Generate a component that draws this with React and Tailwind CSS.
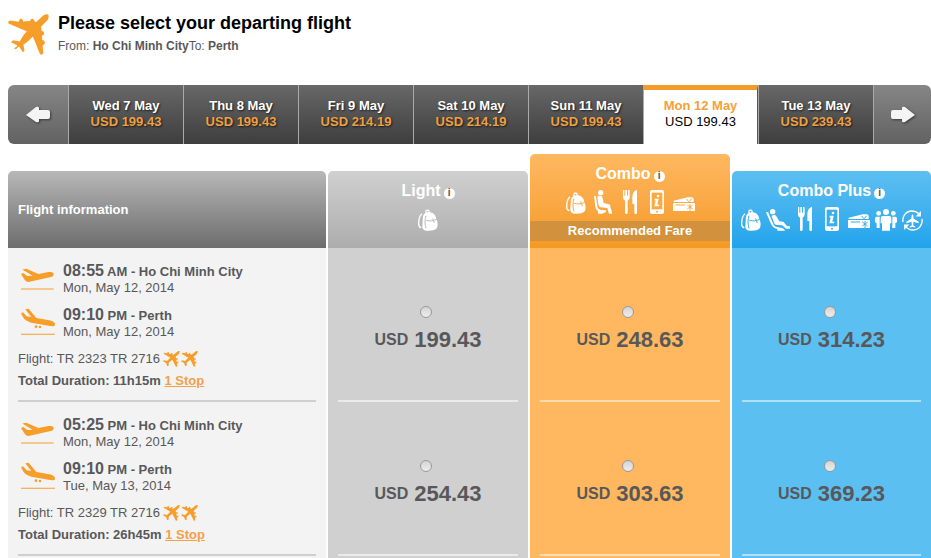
import React, { useState } from "react";

const dates = [
  { day: "Wed 7 May", price: "USD 199.43" },
  { day: "Thu 8 May", price: "USD 199.43" },
  { day: "Fri 9 May", price: "USD 214.19" },
  { day: "Sat 10 May", price: "USD 214.19" },
  { day: "Sun 11 May", price: "USD 199.43" },
  { day: "Mon 12 May", price: "USD 199.43" },
  { day: "Tue 13 May", price: "USD 239.43" },
];

const flights = [
  {
    depart: { time: "08:55", half: "AM", city: "Ho Chi Minh City", date: "Mon, May 12, 2014" },
    arrive: { time: "09:10", half: "PM", city: "Perth", date: "Mon, May 12, 2014" },
    numbers: "TR 2323 TR 2716",
    duration: "11h15m",
    fares: ["199.43", "248.63", "314.23"],
  },
  {
    depart: { time: "05:25", half: "PM", city: "Ho Chi Minh City", date: "Mon, May 12, 2014" },
    arrive: { time: "09:10", half: "PM", city: "Perth", date: "Tue, May 13, 2014" },
    numbers: "TR 2329 TR 2716",
    duration: "26h45m",
    fares: ["254.43", "303.63", "369.23"],
  },
];

const fareStyles = [
  { name: "Light", cell: "bg-[#d0d0d0]", line: "border-[#ebebeb]" },
  { name: "Combo", cell: "bg-[#ffb860]", line: "border-[#ffddaf]" },
  { name: "Combo Plus", cell: "bg-[#5cbff1]", line: "border-[#b0e0f8]" },
];

function Plane({ className }) {
  return (
    <svg viewBox="23 44 122 122" className={className} fill="#f79d2a" aria-hidden="true">
      <path d="M143 46C137 43 131 46 126 50L107 68L102 66C101 57 93 55 90 62L88 65L68 66C67 56 58 56 56 64L55 67L30 63L24 66V72L79 95C70 105 63 115 58 126L38 122L32 128L50 137C51 140 47 143 41 146L45 149C50 148 53 142 56 141L67 158L72 153L69 135C79 129 88 120 97 111L118 163L124 165L128 161L126 138C134 135 135 125 128 122L125 121L124 109C132 106 133 98 126 95L123 94L121 82L139 64C144 58 145 51 143 46Z" />
    </svg>
  );
}

function SmallPlane() {
  return (
    <svg viewBox="0 0 51 48" className="h-4 w-[17px]" fill="#f79d2a" aria-hidden="true">
      <path d="M50 0C46 -1 42 2 39 5L32 11L28 10V6H24V9L18 8V4H13V7L4 5L2 8L22 20L12 30L3 28L0 31L9 36L13 46L17 44L17 35L28 26L39 48L43 46L42 37H46V32H41L40 26H44V22H39L38 17L45 11C48 8 51 4 50 0Z" />
    </svg>
  );
}

function TakeOff() {
  return (
    <svg viewBox="60 39 106 66" className="mt-1 h-[22px] w-[35px]" fill="#f79d2a" aria-hidden="true">
      <path d="M67 43L79 41L116 57L146 51C158 49 163 53 162 58C161 63 157 66 150 67L86 81C80 81 76 78 73 73L63 57L70 54L82 63L98 62Z" />
      <path d="M63 101H162V104H63Z" />
    </svg>
  );
}

function Landing() {
  return (
    <svg viewBox="60 160 108 81" className="h-[27px] w-[36px]" fill="#f79d2a" aria-hidden="true">
      <path d="M76 164L86 162L109 190L148 197C160 199 166 205 165 210C164 215 158 215 150 214L94 204C80 200 73 194 69 187L63 176L69 173L80 185L94 187Z" />
      <circle cx="108" cy="216" r="4" />
      <circle cx="120" cy="217" r="4" />
      <path d="M63 237H165V240H63Z" />
    </svg>
  );
}

function Backpack() {
  return (
    <svg viewBox="0 0 60 66" className="h-[22px] w-[20px]" aria-hidden="true">
      <g fill="none" stroke="#fff" strokeWidth="4">
        <path d="M12 14C4 20 2 30 2 44C2 52 5 55 10 56" />
        <path d="M24 12V6C24 3 33 3 33 6V12" />
      </g>
      <path fill="#fff" d="M15 22C17 14 24 10 32 10C46 10 54 18 55 32C60 38 60 52 56 58C50 65 36 66 26 65C16 64 13 60 13 52Z" />
      <g fill="none" stroke="currentColor" strokeWidth="3">
        <path d="M24 20C20 32 20 46 24 58" />
        <path d="M25 34C36 37 48 36 55 31M44 28L49 42" />
      </g>
    </svg>
  );
}

function Seat() {
  return (
    <svg viewBox="0 0 54 72" className="h-[24px] w-[18px]" fill="#fff" aria-hidden="true">
      <circle cx="20" cy="8" r="8" />
      <path d="M10 20C13 16 23 16 25 21L29 39L45 43C49 44 49 48 49 51L54 66V71H45L40 54L21 52C16 51 14 48 13 43Z" />
      <path d="M0 17L6 19L10 48C11 56 15 59 21 60L36 61V66L24 71H12V63C7 60 5 55 4 50Z" />
    </svg>
  );
}

function Recline() {
  return (
    <svg viewBox="0 0 72 66" className="h-[22px] w-[24px]" fill="#fff" aria-hidden="true">
      <circle cx="20" cy="8" r="8" />
      <path d="M17 21C21 16 29 17 31 22L40 37L52 38L63 51L72 52V59H60L49 49L32 48C28 47 26 45 24 41Z" />
      <path d="M0 10L6 9L21 43C24 51 29 54 36 55L50 57L58 65H34V60C24 58 19 53 15 45Z" />
    </svg>
  );
}

function Cutlery() {
  return (
    <svg viewBox="0 0 42 72" className="h-[24px] w-[14px]" fill="#fff" aria-hidden="true">
      <path d="M0 0H4V17H7V0H12V17H15V0H20V22C20 28 16 30 14 32V68C14 73 6 73 6 68V32C3 30 0 28 0 22Z" />
      <path d="M42 0V68C42 73 34 73 34 68V42H28V22C28 10 34 1 42 0Z" />
    </svg>
  );
}

function Phone() {
  return (
    <svg viewBox="0 0 42 72" className="h-[24px] w-[14px]" aria-hidden="true">
      <rect width="42" height="72" rx="6" fill="#fff" />
      <rect x="5" y="8" width="32" height="50" fill="currentColor" />
      <g fill="#fff">
        <circle cx="24" cy="18" r="4" />
        <path d="M14 26H26L22 44H28L27 49H13L14 44L17 31H13Z" />
      </g>
      <circle cx="21" cy="65" r="3" fill="currentColor" />
    </svg>
  );
}

function Tickets() {
  return (
    <svg viewBox="0 0 66 48" className="mb-[2px] h-[16px] w-[22px]" aria-hidden="true">
      <path fill="#fff" d="M2 14L44 4L58 4L62 8V18H2Z" />
      <rect y="21" width="66" height="24" rx="2" fill="#fff" />
      <g fill="none" stroke="currentColor" strokeWidth="3">
        <path d="M8 27H36M41 9L47 17M56 8L49 17" />
        <path d="M43 27L59 39M59 27L43 39M51 24V45" />
      </g>
    </svg>
  );
}

function Family() {
  return (
    <svg viewBox="0 0 66 66" className="h-[22px] w-[22px]" fill="#fff" aria-hidden="true">
      <circle cx="11" cy="13" r="7" />
      <circle cx="55" cy="13" r="7" />
      <path d="M5 23H14V57H5V42L0 40V29Q0 23 5 23ZM61 23H52V57H61V42L66 40V29Q66 23 61 23Z" />
      <circle cx="33" cy="9" r="9" />
      <path d="M24 21H42Q49 21 49 28V43H45V65H21V43H17V28Q17 21 24 21Z" />
    </svg>
  );
}

function FlexiPlane() {
  return (
    <svg viewBox="0 0 62 62" className="h-[21px] w-[21px]" aria-hidden="true">
      <g fill="none" stroke="#fff" strokeWidth="4">
        <path d="M3 36C0 20 10 4 29 3C38 3 45 6 51 13" />
        <path d="M59 26C62 42 51 58 33 59C24 59 17 56 11 49" />
      </g>
      <path fill="#fff" d="M56 3V19H40ZM6 59V43H22Z" />
      <path fill="#fff" d="M31 13C34 13 34 18 34 25L49 35V39L34 35L33 45L39 49V52L31 50L23 52V49L29 45L28 35L13 39V35L28 25C28 18 28 13 31 13Z" />
    </svg>
  );
}

function ArrowLeft() {
  return (
    <svg viewBox="0 0 24 18" className="h-[18px] w-[24px] drop-shadow-[1px_1px_1px_#00000080]" fill="#f4f4f4" aria-hidden="true">
      <path d="M0 9L10 1Q13 0 13 2V4H22Q24 4 24 6V11Q24 13 22 13H13V15Q13 17 10 16Z" />
    </svg>
  );
}

function ArrowRight() {
  return (
    <svg viewBox="0 0 24 18" className="h-[18px] w-[24px] drop-shadow-[1px_1px_1px_#00000080]" fill="#f4f4f4" aria-hidden="true">
      <path d="M24 9L14 1Q11 0 11 2V4H2Q0 4 0 6V11Q0 13 2 13H11V15Q11 17 14 16Z" />
    </svg>
  );
}

function FareTitle({ children }) {
  return (
    <div className="flex items-center justify-center gap-[3px] text-[16px] leading-5 font-bold text-white">
      <span>{children}</span>
      <button
        type="button"
        aria-label={`About ${children}`}
        className="mt-1 flex size-[11px] items-center justify-center rounded-full bg-white text-[10px] leading-none font-bold text-[#555]"
      >
        i
      </button>
    </div>
  );
}

function Perks({ icons }) {
  return (
    <div className="flex h-[25px] justify-center pb-px">
      {icons.map((Icon, i) => (
        <span key={i} className="flex w-[27px] items-end justify-center">
          <Icon />
        </span>
      ))}
    </div>
  );
}

function Leg({ icon, leg }) {
  return (
    <div className="flex h-11 gap-[7px] pl-[2px]">
      <div className="flex w-9 items-start pt-[2px]">{icon}</div>
      <div>
        <div className="text-[13px] leading-[18px] font-bold">
          <span className="text-[16px]">{leg.time}</span> {leg.half} - {leg.city}
        </div>
        <div className="leading-[14px]">{leg.date}</div>
      </div>
    </div>
  );
}

export default function App() {
  const [selectedDate, setSelectedDate] = useState(5);

  return (
    <main className="overflow-hidden bg-white pl-2 font-['Liberation_Sans',Arial,sans-serif] text-[13px] text-[#58585a]">
      <header className="flex gap-[9px] pt-[14px]">
        <Plane className="size-[41px]" />
        <div className="-mt-[2px]">
          <h1 className="text-[18px] leading-[22px] font-bold text-black">
            Please select your departing flight
          </h1>
          <p className="pt-1 text-[12px] leading-4">
            From: <b>Ho Chi Minh City</b>To: <b>Perth</b>
          </p>
        </div>
      </header>

      <nav
        aria-label="Departure dates"
        className="mt-[30px] grid h-[59px] grid-cols-[60px_repeat(7,1fr)_58px] overflow-hidden rounded-md"
      >
        <button
          type="button"
          aria-label="Earlier dates"
          className="flex items-center justify-center bg-linear-to-b from-[#868686] to-[#626262]"
        >
          <ArrowLeft />
        </button>
        {dates.map((d, i) =>
          i === selectedDate ? (
            <button
              key={d.day}
              type="button"
              aria-current="date"
              className="border-t-[5px] border-r border-l border-t-[#f59b2c] border-r-[#555] border-l-[#aaa] bg-white pb-[6px] leading-4"
            >
              <span className="block font-bold text-[#f5a03a]">{d.day}</span>
              <span className="block text-black">{d.price}</span>
            </button>
          ) : (
            <button
              key={d.day}
              type="button"
              onClick={() => setSelectedDate(i)}
              className="border-l border-[#aaa] bg-linear-to-b from-[#686868] to-[#3e3e3e] pb-[2px] leading-4 font-bold text-shadow-[1px_1px_2px_#000000b0]"
            >
              <span className="block text-white">{d.day}</span>
              <span className="block text-[#f0a040]">{d.price}</span>
            </button>
          ),
        )}
        <button
          type="button"
          aria-label="Later dates"
          className="flex items-center justify-center border-l border-[#aaa] bg-linear-to-b from-[#868686] to-[#626262]"
        >
          <ArrowRight />
        </button>
      </nav>

      <table className="mt-[10px] w-full table-fixed border-separate border-spacing-0">
        <colgroup>
          <col />
          <col className="w-[202px]" />
          <col className="w-[202px]" />
          <col className="w-[201px]" />
        </colgroup>
        <thead>
          <tr className="align-bottom">
            <th scope="col" className="p-0 text-left">
              <div className="flex h-[77px] items-center rounded-t-[5px] bg-linear-to-b from-[#b8b8b8] to-[#6d6d6d] px-[10px] font-bold text-white">
                Flight information
              </div>
            </th>
            <th scope="col" className="border-l-2 border-white p-0">
              <div className="flex h-[77px] flex-col gap-[6px] rounded-t-[5px] bg-linear-to-b from-[#d0d0d0] to-[#adadad] pt-[10px] text-[#bdbdbd]">
                <FareTitle>Light</FareTitle>
                <Perks icons={[Backpack]} />
              </div>
            </th>
            <th scope="col" className="border-l-2 border-white p-0">
              <div className="flex h-[94px] flex-col gap-[6px] rounded-t-[5px] bg-linear-to-b from-[#ffb860] to-[#f59a22] pt-[10px] text-[#fba941]">
                <FareTitle>Combo</FareTitle>
                <Perks icons={[Backpack, Seat, Cutlery, Phone, Tickets]} />
                <div className="bg-[#d2913c] leading-5 font-bold text-white">Recommended Fare</div>
              </div>
            </th>
            <th scope="col" className="border-l-2 border-white p-0">
              <div className="flex h-[77px] flex-col gap-[6px] rounded-t-[5px] bg-linear-to-b from-[#5cbff1] to-[#1fa4ec] pt-[10px] text-[#39aeef]">
                <FareTitle>Combo Plus</FareTitle>
                <Perks icons={[Backpack, Recline, Cutlery, Phone, Tickets, Family, FlexiPlane]} />
              </div>
            </th>
          </tr>
        </thead>
        <tbody>
          {flights.map((f, row) => (
            <tr key={f.numbers} className="group">
              <td className="bg-[#f3f3f3] px-[10px] py-0 group-last:pb-2">
                <div className="h-[154px] border-b-2 border-[#cfcfcf] pt-[14px]">
                  <Leg icon={<TakeOff />} leg={f.depart} />
                  <Leg icon={<Landing />} leg={f.arrive} />
                  <div className="flex h-[18px] items-center gap-[3px]">
                    <span>Flight: {f.numbers}</span>
                    <span className="flex gap-px">
                      <SmallPlane />
                      <SmallPlane />
                    </span>
                  </div>
                  <div className="pt-1 leading-[18px] font-bold">
                    Total Duration: {f.duration}{" "}
                    <a href="#stops" className="text-[#f3a04a] underline">
                      1 Stop
                    </a>
                  </div>
                </div>
              </td>
              {f.fares.map((price, col) => (
                <td
                  key={fareStyles[col].name}
                  className={`border-l-2 border-white px-[10px] py-0 group-last:pb-2 ${fareStyles[col].cell}`}
                >
                  <div className={`h-[154px] border-b-2 pt-[58px] ${fareStyles[col].line}`}>
                    <label className="flex flex-col items-center">
                      <input
                        type="radio"
                        name="fare"
                        value={`${row}-${col}`}
                        className="mr-1 size-3 appearance-none rounded-full border border-[#999] bg-linear-to-b from-[#d4d4d4] to-[#eee] checked:bg-[#555]"
                      />
                      <span className="pt-[9px] text-[22px] leading-[26px] font-bold">
                        <span className="mr-[6px] inline-block align-[2px] text-[16px] leading-none">USD</span>
                        {price}
                      </span>
                    </label>
                  </div>
                </td>
              ))}
            </tr>
          ))}
        </tbody>
      </table>
    </main>
  );
}
